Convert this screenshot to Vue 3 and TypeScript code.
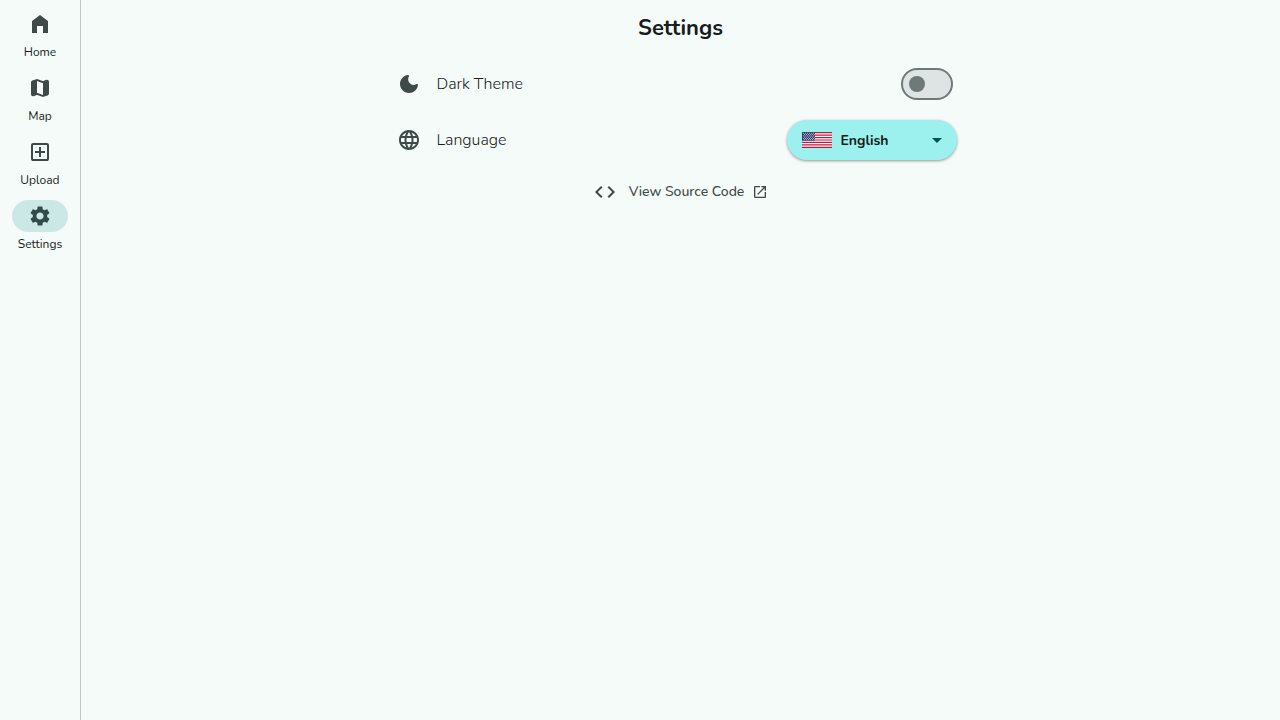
<script setup lang="ts">
import { ref } from 'vue'

interface Destination {
  label: string
  path: string
}

const destinations: Destination[] = [
  { label: 'Home', path: 'M4 21V9l8-6 8 6v12h-5v-7H9v7z' },
  {
    label: 'Map',
    path: 'M14.65 4.98l-5-1.75c-.42-.15-.88-.15-1.3-.01L4.36 4.56C3.55 4.84 3 5.6 3 6.46v11.85c0 1.41 1.41 2.37 2.72 1.86l2.93-1.14c.22-.09.47-.09.69-.01l5 1.75c.42.15.88.15 1.3.01l3.99-1.34c.81-.27 1.36-1.04 1.36-1.9V5.69c0-1.41-1.41-2.37-2.72-1.86l-2.93 1.14c-.22.08-.46.09-.69.01zM15 18.89l-6-2.11V5.11l6 2.11v11.67z',
  },
  {
    label: 'Upload',
    path: 'M11 17h2v-4h4v-2h-4V7h-2v4H7v2h4zM5 21q-.825 0-1.413-.587Q3 19.825 3 19V5q0-.825.587-1.413Q4.175 3 5 3h14q.825 0 1.413.587Q21 4.175 21 5v14q0 .825-.587 1.413Q19.825 21 19 21zm0-2h14V5H5z',
  },
  {
    label: 'Settings',
    path: 'M19.14 12.94c.04-.3.06-.61.06-.94 0-.32-.02-.64-.07-.94l2.03-1.58c.18-.14.23-.41.12-.61l-1.92-3.32c-.12-.22-.37-.29-.59-.22l-2.39.96c-.5-.38-1.03-.7-1.62-.94L14.4 2.81c-.04-.24-.24-.41-.48-.41h-3.84c-.24 0-.43.17-.47.41L9.25 5.35C8.66 5.59 8.12 5.92 7.63 6.29L5.24 5.33c-.22-.08-.47 0-.59.22L2.74 8.87c-.12.21-.08.47.12.61l2.03 1.58c-.05.3-.09.63-.09.94s.02.64.07.94l-2.03 1.58c-.18.14-.23.41-.12.61l1.92 3.32c.12.22.37.29.59.22l2.39-.96c.5.38 1.03.7 1.62.94l.36 2.54c.05.24.24.41.48.41h3.84c.24 0 .44-.17.47-.41l.36-2.54c.59-.24 1.13-.56 1.62-.94l2.39.96c.22.08.47 0 .59-.22l1.92-3.32c.12-.22.07-.47-.12-.61zM12 15.6c-1.98 0-3.6-1.62-3.6-3.6s1.62-3.6 3.6-3.6 3.6 1.62 3.6 3.6-1.62 3.6-3.6 3.6z',
  },
]

const active = ref('Settings')
const darkTheme = ref(false)
const language = ref('en')
</script>

<template>
  <div class="app">
    <nav class="rail" aria-label="Main">
      <a
        v-for="item in destinations"
        :key="item.label"
        href="#"
        class="destination"
        :class="{ active: item.label === active }"
        @click.prevent="active = item.label"
      >
        <span class="indicator">
          <svg class="icon" viewBox="0 0 24 24" aria-hidden="true"><path :d="item.path" /></svg>
        </span>
        <span class="label">{{ item.label }}</span>
      </a>
    </nav>

    <main class="page">
      <h1 class="title">Settings</h1>
      <div class="settings">
        <div class="row">
          <svg class="icon" viewBox="0 0 24 24" aria-hidden="true">
            <path d="M11.01 3.05C6.51 3.54 3 7.36 3 12c0 4.97 4.03 9 9 9 4.63 0 8.45-3.5 8.95-8 .09-.79-.78-1.42-1.54-.95A5.403 5.403 0 0 1 11.1 7.5c0-1.06.31-2.06.84-2.89.45-.67-.04-1.63-.93-1.56z" />
          </svg>
          <label class="name" for="dark-theme">Dark Theme</label>
          <input id="dark-theme" v-model="darkTheme" class="switch" type="checkbox" role="switch" />
        </div>

        <div class="row">
          <svg class="icon" viewBox="0 0 24 24" aria-hidden="true">
            <path d="M11.99 2C6.47 2 2 6.48 2 12s4.47 10 9.99 10C17.52 22 22 17.52 22 12S17.52 2 11.99 2zm6.93 6h-2.95a15.65 15.65 0 0 0-1.38-3.56A8.03 8.03 0 0 1 18.92 8zM12 4.04c.83 1.2 1.48 2.53 1.91 3.96h-3.82c.43-1.43 1.08-2.76 1.91-3.96zM4.26 14C4.1 13.36 4 12.69 4 12s.1-1.36.26-2h3.38c-.08.66-.14 1.32-.14 2s.06 1.34.14 2H4.26zm.82 2h2.95c.32 1.25.78 2.45 1.38 3.56A7.99 7.99 0 0 1 5.08 16zm2.95-8H5.08a7.99 7.99 0 0 1 4.33-3.56A15.65 15.65 0 0 0 8.03 8zM12 19.96c-.83-1.2-1.48-2.53-1.91-3.96h3.82c-.43 1.43-1.08 2.76-1.91 3.96zM14.34 14H9.66c-.09-.66-.16-1.32-.16-2s.07-1.35.16-2h4.68c.09.65.16 1.32.16 2s-.07 1.34-.16 2zm.25 5.56c.6-1.11 1.06-2.31 1.38-3.56h2.95a8.03 8.03 0 0 1-4.33 3.56zM16.36 14c.08-.66.14-1.32.14-2s-.06-1.34-.14-2h3.38c.16.64.26 1.31.26 2s-.1 1.36-.26 2h-3.38z" />
          </svg>
          <label class="name" for="language">Language</label>
          <div class="picker">
            <select id="language" v-model="language" class="select">
              <option value="en">English</option>
            </select>
            <svg class="flag" viewBox="0 0 30 16" aria-hidden="true">
              <rect width="30" height="16" fill="#fff" />
              <path
                d="M0 .615h30M0 3.077h30M0 5.538h30M0 8h30M0 10.462h30M0 12.923h30M0 15.385h30"
                stroke="#bd1d3c"
                stroke-width="1.231"
              />
              <rect width="13" height="8.615" fill="#3c3b6e" />
              <path
                d="M1 1.3h12M2 2.6h11M1 3.9h12M2 5.2h11M1 6.5h12M2 7.6h11"
                stroke="#fff"
                stroke-width=".7"
                stroke-dasharray=".9 1.1"
              />
            </svg>
            <svg class="arrow" viewBox="0 0 24 24" aria-hidden="true"><path d="m7 10 5 5 5-5z" /></svg>
          </div>
        </div>

        <a class="source" href="#">
          <svg class="icon" viewBox="0 0 24 24" aria-hidden="true">
            <path d="M9.4 16.6 4.8 12l4.6-4.6L8 6l-6 6 6 6zm5.2 0 4.6-4.6-4.6-4.6L16 6l6 6-6 6z" />
          </svg>
          <span class="source-text">View Source Code</span>
          <svg class="open" viewBox="0 0 24 24" aria-hidden="true">
            <path d="M19 19H5V5h7V3H5a2 2 0 0 0-2 2v14a2 2 0 0 0 2 2h14c1.1 0 2-.9 2-2v-7h-2zM14 3v2h3.590l-9.830 9.830 1.410 1.410L19 6.410V10h2V3z" />
          </svg>
        </a>
      </div>
    </main>
  </div>
</template>

<style>
body {
  margin: 0;
  background: #f5fbf9;
}
</style>

<style scoped>
.app {
  display: flex;
  min-height: 100vh;
  background: #f5fbf9;
  color: #161d1c;
  font-family: Nunito, "Open Sans", sans-serif;
}

.rail {
  display: flex;
  flex: 0 0 80px;
  flex-direction: column;
  gap: 4px;
  padding-top: 8px;
  border-right: 1px solid #bec9c7;
}

.destination {
  display: flex;
  flex-direction: column;
  align-items: center;
  gap: 4px;
  height: 60px;
  color: #161d1c;
  text-decoration: none;
}

.indicator {
  display: flex;
  align-items: center;
  justify-content: center;
  width: 56px;
  height: 32px;
  border-radius: 16px;
}

.active .indicator {
  background: #cce8e6;
}

.active .icon {
  fill: #324b4a;
}

.label {
  font-size: 12px;
  line-height: 16px;
}

.icon {
  flex: none;
  width: 24px;
  height: 24px;
  fill: #3f4947;
}

.page {
  flex: 1;
  min-width: 0;
}

.title {
  margin: 0;
  font-size: 22px;
  font-weight: 700;
  line-height: 56px;
  text-align: center;
}

.settings {
  display: flex;
  flex-direction: column;
  max-width: 600px;
  margin: 0 auto;
}

.row {
  display: flex;
  align-items: center;
  gap: 16px;
  height: 56px;
  padding: 0 24px 0 16px;
}

.name {
  flex: 1;
  font-size: 16px;
  font-weight: 300;
  line-height: 24px;
}

.switch {
  display: flex;
  align-items: center;
  box-sizing: border-box;
  width: 52px;
  height: 32px;
  margin: 0 4px;
  padding: 0 6px;
  border: 2px solid #6f7977;
  border-radius: 16px;
  background: #dee4e3;
  appearance: none;
}

.switch::before {
  width: 16px;
  height: 16px;
  border-radius: 8px;
  background: #6f7977;
  content: "";
}

.switch:checked {
  justify-content: flex-end;
}

.picker {
  position: relative;
  width: 170px;
}

.select {
  display: block;
  box-sizing: border-box;
  width: 100%;
  height: 40px;
  padding: 0 40px 0 54px;
  border: 0;
  border-radius: 20px;
  background: #9cf1ee;
  box-shadow: 0 1px 3px rgb(0 0 0 / 40%);
  color: #161d1c;
  font-family: inherit;
  font-size: 14px;
  font-weight: 700;
  appearance: none;
}

.flag {
  position: absolute;
  top: 12px;
  left: 15px;
  width: 30px;
  height: 16px;
  pointer-events: none;
}

.arrow {
  position: absolute;
  top: 8px;
  right: 8px;
  width: 24px;
  height: 24px;
  fill: #00504e;
  pointer-events: none;
}

.source {
  display: flex;
  align-items: center;
  align-self: center;
  height: 40px;
  margin-top: 4px;
  color: #3f4947;
  text-decoration: none;
}

.source-text {
  margin: 0 8px 0 12px;
  font-size: 14px;
  font-weight: 500;
  line-height: 20px;
}

.open {
  width: 16px;
  height: 16px;
  fill: #3f4947;
}
</style>
